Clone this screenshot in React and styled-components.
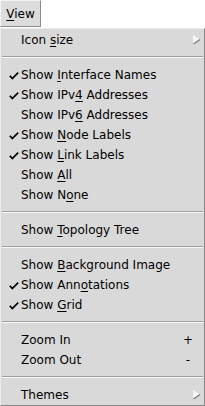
import React from "react";
import styled, { createGlobalStyle } from "styled-components";

const Global = createGlobalStyle`
  html, body { margin: 0; padding: 0; background: #ffffff; }
  body { font-family: "DejaVu Sans", sans-serif; font-size: 12px; color: #000; }
`;

const Page = styled.div`
  width: 205px;
  height: 406px;
  display: flex;
  flex-direction: column;
  overflow: hidden;
`;

const MenuButton = styled.div`
  box-sizing: border-box;
  width: 41px;
  height: 27px;
  display: flex;
  align-items: center;
  justify-content: center;
  padding-top: 1px;
  background: #dcdcdc;
  border-top: 1px solid #f4f4f4;
  border-left: 1px solid #f4f4f4;
  border-right: 1px solid #8c8c8c;
  border-bottom: 1px solid #8c8c8c;
  font-size: 12px;
`;

const Menu = styled.div`
  box-sizing: border-box;
  margin-top: 1px;
  width: 205px;
  height: 378px;
  background: #d9d9d9;
  border-top: 1px solid #ececec;
  border-left: 1px solid #ececec;
  border-right: 1px solid #888888;
  border-bottom: 1px solid #888888;
  display: flex;
  flex-direction: column;
`;

const Item = styled.div`
  position: relative;
  box-sizing: border-box;
  height: 20px;
  display: flex;
  align-items: center;
  padding-top: 1px;
  padding-left: 20px;
  padding-right: 10px;
  white-space: nowrap;
`;

const Label = styled.span`
  flex: 1;
`;

const U = styled.span`
  text-decoration: underline;
  text-underline-offset: 2px;
  text-decoration-thickness: 1px;
`;

const Accel = styled.span`
  width: 12px;
  text-align: center;
`;

const Check = styled.svg`
  position: absolute;
  left: 8px;
  top: 8px;
`;

const Arrow = styled.svg`
  position: absolute;
  right: 3px;
  top: 6px;
`;

const Separator = styled.div`
  height: 15px;
  display: flex;
  flex-direction: column;
  justify-content: center;
  padding: 0 1px;
  &::before {
    content: "";
    display: block;
    height: 1px;
    background: #a0a0a0;
  }
  &::after {
    content: "";
    display: block;
    height: 1px;
    background: #f8f8f8;
  }
`;

const CheckMark = () => (
  <Check width="10" height="8" viewBox="0 0 10 8">
    <path d="M0.8 3.8 L3.3 6.6 L9.2 0.6" fill="none" stroke="#000" strokeWidth="1.7" />
  </Check>
);

const SubArrow = () => (
  <Arrow width="8" height="10" viewBox="0 0 8 10">
    <polygon points="0,0 0,9 7,4.5" fill="#f6f6f6" />
    <line x1="0.5" y1="9" x2="7" y2="4.5" stroke="#7a7a7a" strokeWidth="1.3" />
  </Arrow>
);

const Entry = ({ checked, sub, accel, children }) => (
  <Item>
    {checked && <CheckMark />}
    <Label>{children}</Label>
    {accel && <Accel>{accel}</Accel>}
    {sub && <SubArrow />}
  </Item>
);

export default function App() {
  return (
    <Page>
      <Global />
      <MenuButton>
        <span><U>V</U>iew</span>
      </MenuButton>
      <Menu>
        <Entry sub>Icon <U>s</U>ize</Entry>
        <Separator />
        <Entry checked>Show <U>I</U>nterface Names</Entry>
        <Entry checked>Show IPv<U>4</U> Addresses</Entry>
        <Entry>Show IPv<U>6</U> Addresses</Entry>
        <Entry checked>Show <U>N</U>ode Labels</Entry>
        <Entry checked>Show <U>L</U>ink Labels</Entry>
        <Entry>Show <U>A</U>ll</Entry>
        <Entry>Show N<U>o</U>ne</Entry>
        <Separator />
        <Entry>Show <U>T</U>opology Tree</Entry>
        <Separator />
        <Entry>Show <U>B</U>ackground Image</Entry>
        <Entry checked>Show Ann<U>o</U>tations</Entry>
        <Entry checked>Show <U>G</U>rid</Entry>
        <Separator />
        <Entry accel="+">Zoom In</Entry>
        <Entry accel="-">Zoom Out</Entry>
        <Separator />
        <Entry sub>Themes</Entry>
      </Menu>
    </Page>
  );
}
